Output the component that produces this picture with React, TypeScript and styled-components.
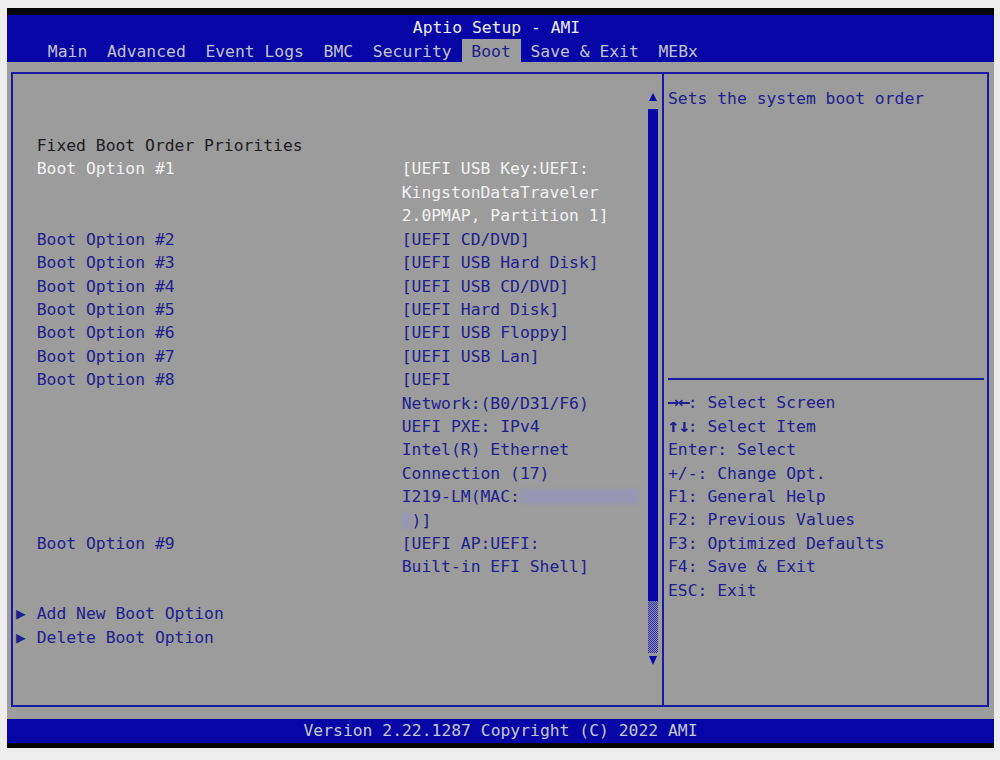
import React from "react";
import styled, { createGlobalStyle } from "styled-components";

const Global = createGlobalStyle`
  html, body { margin: 0; padding: 0; background: #ededed; }
  body { font-family: "DejaVu Sans Mono", "Liberation Mono", monospace; }
  * { box-sizing: border-box; }
`;

const BLUE = "#0606a6";
const GRAY = "#9c9c9c";
const NAVY = "#20208e";
const LINE = "#1a1aa2";

const Screen = styled.div`
  width: 987px;
  height: 740px;
  margin: 8px 0 0 7px;
  display: flex;
  flex-direction: column;
  background: ${GRAY};
  font-size: 16.36px;
  line-height: 23.4px;
  white-space: pre;
`;

const Band = styled.div<{ $h: number }>`
  flex: none;
  height: ${(p) => p.$h}px;
  background: #050505;
`;

const Header = styled.header`
  flex: none;
  height: 47px;
  background: ${BLUE};
  display: flex;
  flex-direction: column;
`;

const Title = styled.div`
  height: 24px;
  padding: 2px 8px 0 0;
  line-height: 22px;
  text-align: center;
  color: #ececf2;
`;

const TabRow = styled.nav`
  height: 23px;
  display: flex;
  padding-left: 31px;
`;

const Tab = styled.span<{ $active?: boolean }>`
  padding: 3px 1ch 0;
  line-height: 20px;
  color: ${(p) => (p.$active ? NAVY : "#c2c2d0")};
  background: ${(p) => (p.$active ? GRAY : "transparent")};
`;

const Body = styled.main`
  flex: 1;
  padding: 10px 5px 12px 4px;
  display: flex;
`;

const Frame = styled.div`
  flex: 1;
  display: flex;
  border: 2px solid ${LINE};
`;

const LeftPane = styled.section`
  width: 635px;
  padding: 13.3px 0 0 4px;
  display: flex;
  flex-direction: column;
`;

const Row = styled.div`
  display: grid;
  grid-template-columns: 2ch 365px 1fr;
  min-height: 23.4px;
`;

const Marker = styled.span`
  color: ${NAVY};
  font-size: 16px;
  margin-left: -1px;
`;

const Label = styled.span<{ $tone: "white" | "navy" | "black" }>`
  color: ${(p) =>
    p.$tone === "white" ? "#f2f2f2" : p.$tone === "black" ? "#1c1c22" : NAVY};
`;

const Values = styled.span<{ $tone: "white" | "navy" }>`
  display: flex;
  flex-direction: column;
  color: ${(p) => (p.$tone === "white" ? "#f2f2f2" : NAVY)};
`;

const Blur = styled.span<{ $w: number }>`
  display: inline-block;
  width: ${(p) => p.$w}ch;
  height: 15px;
  vertical-align: -2px;
  background: rgba(150, 150, 190, 0.7);
  filter: blur(1.5px);
`;

const ScrollCol = styled.div`
  width: 10px;
  margin-right: 4px;
  padding-top: 19px;
  display: flex;
  flex-direction: column;
  align-items: center;
`;

const UpArrow = styled.div`
  width: 0;
  height: 0;
  border-left: 4px solid transparent;
  border-right: 4px solid transparent;
  border-bottom: 8px solid ${BLUE};
`;

const DownArrow = styled.div`
  margin-top: 3px;
  width: 0;
  height: 0;
  border-left: 4.5px solid transparent;
  border-right: 4.5px solid transparent;
  border-top: 9px solid ${BLUE};
`;

const Thumb = styled.div`
  margin-top: 8px;
  width: 10px;
  height: 492px;
  background: ${BLUE};
`;

const Track = styled.div`
  width: 10px;
  height: 52px;
  background: repeating-conic-gradient(#3030a4 0 25%, #8e8eb0 0 50%) 0 0 / 2px 2px;
`;

const Divider = styled.div`
  width: 2px;
  background: ${LINE};
`;

const RightPane = styled.aside`
  flex: 1;
  padding: 13.3px 0 0 4px;
  display: flex;
  flex-direction: column;
  color: ${NAVY};
`;

const HelpArea = styled.div`
  height: 290.7px;
`;

const Rule = styled.div`
  height: 2px;
  margin-right: 3px;
  background: ${LINE};
`;

const KeyList = styled.div`
  margin-top: 11.3px;
  display: flex;
  flex-direction: column;
`;

const KeyGlyph = styled.span`
  display: inline-block;
  width: 2ch;
  font-weight: bold;
  transform: scale(1.25, 1.15);
  transform-origin: 20% 60%;
  letter-spacing: -1px;
`;

const Footer = styled.footer`
  flex: none;
  height: 24px;
  line-height: 24px;
  background: ${BLUE};
  text-align: center;
  color: #c6c6d2;
`;

type Tone = "white" | "navy";

const BootItem = ({
  label,
  values,
  tone = "navy",
}: {
  label: string;
  values: React.ReactNode[];
  tone?: Tone;
}) => (
  <Row>
    <span />
    <Label $tone={tone}>{label}</Label>
    <Values $tone={tone}>
      {values.map((v, i) => (
        <span key={i}>{v}</span>
      ))}
    </Values>
  </Row>
);

const tabs = ["Main", "Advanced", "Event Logs", "BMC", "Security", "Boot", "Save & Exit", "MEBx"];

export default function App() {
  return (
    <>
      <Global />
      <Screen>
        <Band $h={7} />
        <Header>
          <Title>Aptio Setup - AMI</Title>
          <TabRow>
            {tabs.map((t) => (
              <Tab key={t} $active={t === "Boot"}>
                {t}
              </Tab>
            ))}
          </TabRow>
        </Header>
        <Body>
          <Frame>
            <LeftPane>
              <Row />
              <Row />
              <Row>
                <span />
                <Label $tone="black">Fixed Boot Order Priorities</Label>
                <span />
              </Row>
              <BootItem
                tone="white"
                label="Boot Option #1"
                values={["[UEFI USB Key:UEFI:", "KingstonDataTraveler", "2.0PMAP, Partition 1]"]}
              />
              <BootItem label="Boot Option #2" values={["[UEFI CD/DVD]"]} />
              <BootItem label="Boot Option #3" values={["[UEFI USB Hard Disk]"]} />
              <BootItem label="Boot Option #4" values={["[UEFI USB CD/DVD]"]} />
              <BootItem label="Boot Option #5" values={["[UEFI Hard Disk]"]} />
              <BootItem label="Boot Option #6" values={["[UEFI USB Floppy]"]} />
              <BootItem label="Boot Option #7" values={["[UEFI USB Lan]"]} />
              <BootItem
                label="Boot Option #8"
                values={[
                  "[UEFI",
                  "Network:(B0/D31/F6)",
                  "UEFI PXE: IPv4",
                  "Intel(R) Ethernet",
                  "Connection (17)",
                  <>
                    I219-LM(MAC:<Blur $w={12} />
                  </>,
                  <>
                    <Blur $w={1} />
                    )]
                  </>,
                ]}
              />
              <BootItem label="Boot Option #9" values={["[UEFI AP:UEFI:", "Built-in EFI Shell]"]} />
              <Row />
              <Row>
                <Marker>▶</Marker>
                <Label $tone="navy">Add New Boot Option</Label>
                <span />
              </Row>
              <Row>
                <Marker>▶</Marker>
                <Label $tone="navy">Delete Boot Option</Label>
                <span />
              </Row>
            </LeftPane>
            <ScrollCol>
              <UpArrow />
              <Thumb />
              <Track />
              <DownArrow />
            </ScrollCol>
            <Divider />
            <RightPane>
              <HelpArea>Sets the system boot order</HelpArea>
              <Rule />
              <KeyList>
                <span>
                  <KeyGlyph>→←</KeyGlyph>: Select Screen
                </span>
                <span>
                  <KeyGlyph>↑↓</KeyGlyph>: Select Item
                </span>
                <span>Enter: Select</span>
                <span>+/-: Change Opt.</span>
                <span>F1: General Help</span>
                <span>F2: Previous Values</span>
                <span>F3: Optimized Defaults</span>
                <span>F4: Save &amp; Exit</span>
                <span>ESC: Exit</span>
              </KeyList>
            </RightPane>
          </Frame>
        </Body>
        <Footer>Version 2.22.1287 Copyright (C) 2022 AMI</Footer>
        <Band $h={5} />
      </Screen>
    </>
  );
}
